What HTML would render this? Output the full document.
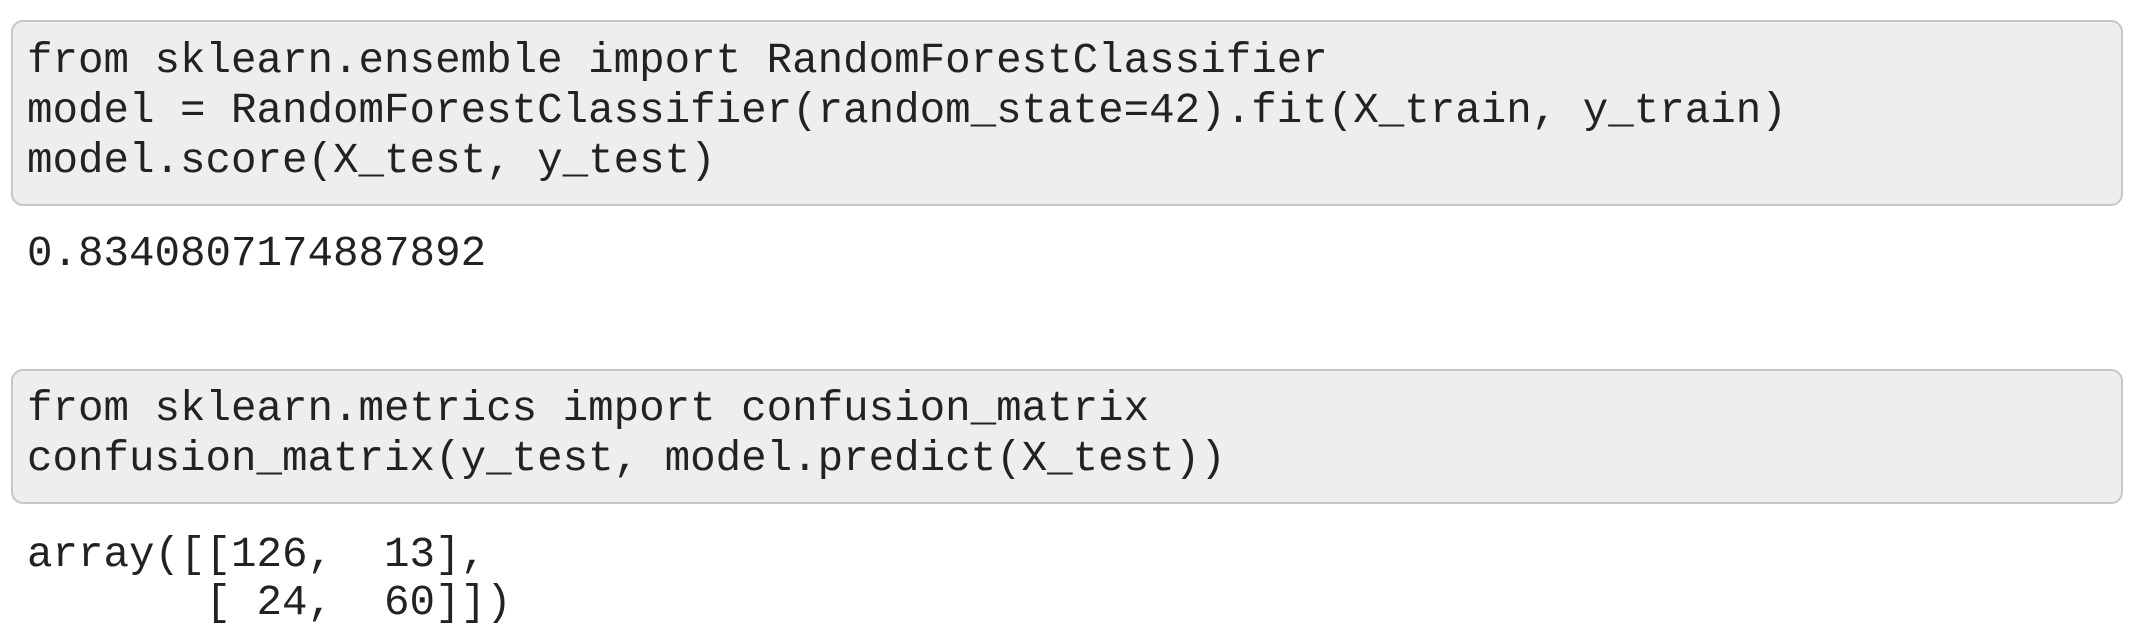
<!DOCTYPE html>
<html><head><style>
body{margin:0;width:2144px;height:642px;background:#fff;overflow:hidden;position:relative;font-family:"Liberation Mono",monospace;font-size:42.5px;color:#222;}
.box{position:absolute;left:11px;width:2112px;background:#eeeeed;border:2px solid #c6c6c6;border-radius:12px;box-sizing:border-box;}
pre{margin:0;font:inherit;line-height:50px;white-space:pre;position:absolute;left:27px;}
</style></head><body>
<div class="box" style="top:20px;height:186px;"></div>
<pre style="top:36px;">from sklearn.ensemble import RandomForestClassifier
model = RandomForestClassifier(random_state=42).fit(X_train, y_train)
model.score(X_test, y_test)</pre>
<pre style="top:229px;">0.8340807174887892</pre>
<div class="box" style="top:369px;height:135px;"></div>
<pre style="top:384px;">from sklearn.metrics import confusion_matrix
confusion_matrix(y_test, model.predict(X_test))</pre>
<pre style="top:531px;line-height:48px;">array([[126,  13],
       [ 24,  60]])</pre>
</body></html>
